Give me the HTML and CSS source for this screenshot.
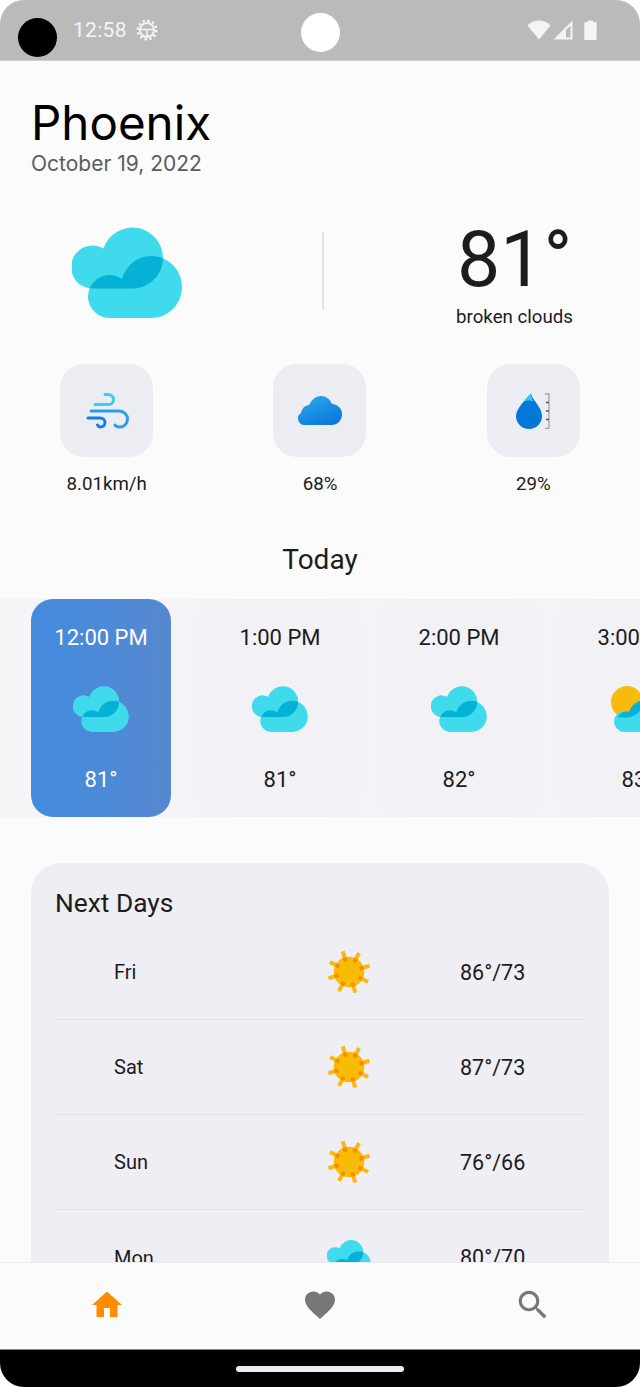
FILE: index.html
```html
<!DOCTYPE html>
<html lang="en">
<head>
    <meta charset="UTF-8" />
    <title>Weather</title>
    <link rel="stylesheet" href="styles.css">
</head>
<body>
    <svg class="defs" width="0" height="0">
        <defs>
            <clipPath id="back-clip">
                <path d="M20.700 61.500A21.500 21.500 0 1 1 31.500 21.500A30.500 30.500 0 1 1 62 61.500z" />
            </clipPath>
            <symbol id="cloud" viewBox="0 0 110 91">
                <path class="cloud-light" d="M20.700 61.500A21.500 21.500 0 1 1 31.500 21.500A30.500 30.500 0 1 1 62 61.500z" />
                <path class="cloud-light" d="M37.700 91A21.500 21.500 0 1 1 50 52A30.500 31 0 1 1 79.500 91z" />
                <path class="cloud-dark" clip-path="url(#back-clip)" d="M37.700 91A21.500 21.500 0 1 1 50 52A30.500 31 0 1 1 79.500 91z" />
            </symbol>
            <symbol id="sun" viewBox="-22 -22 44 44">
                <g class="rays">
                    <path transform="rotate(-17)" d="M0-14V-21.500" />
                    <path transform="rotate(28)" d="M0-14V-21.500" />
                    <path transform="rotate(73)" d="M0-14V-21.500" />
                    <path transform="rotate(118)" d="M0-14V-21.500" />
                    <path transform="rotate(163)" d="M0-14V-21.500" />
                    <path transform="rotate(208)" d="M0-14V-21.500" />
                    <path transform="rotate(253)" d="M0-14V-21.500" />
                    <path transform="rotate(298)" d="M0-14V-21.500" />
                </g>
                <circle class="sun-disc" r="15.300" />
                <g class="sun-dots">
                    <rect transform="rotate(-17)" x="-2" y="-15" width="4" height="4" />
                    <rect transform="rotate(28)" x="-2" y="-15" width="4" height="4" />
                    <rect transform="rotate(73)" x="-2" y="-15" width="4" height="4" />
                    <rect transform="rotate(118)" x="-2" y="-15" width="4" height="4" />
                    <rect transform="rotate(163)" x="-2" y="-15" width="4" height="4" />
                    <rect transform="rotate(208)" x="-2" y="-15" width="4" height="4" />
                    <rect transform="rotate(253)" x="-2" y="-15" width="4" height="4" />
                    <rect transform="rotate(298)" x="-2" y="-15" width="4" height="4" />
                </g>
            </symbol>
            <linearGradient id="blue-cloud" x1="0.2" y1="0" x2="0.8" y2="1">
                <stop offset="0" stop-color="#2ba6ee" />
                <stop offset="1" stop-color="#0a76d8" />
            </linearGradient>
        </defs>
    </svg>

    <div class="status-bar">
        <span class="camera"></span>
        <span class="status-time">12:58</span>
        <svg class="status-gear" width="22" height="22" viewBox="0 0 22 22">
            <circle cx="11" cy="11" r="9.300" fill="none" stroke="#f4f4f4" stroke-width="2.400" stroke-dasharray="2.400 2.470" />
            <circle cx="11" cy="11" r="7" fill="none" stroke="#f4f4f4" stroke-width="2" />
            <path d="M4 10.500H18M11 10.500V17" fill="none" stroke="#f4f4f4" stroke-width="1.600" />
        </svg>
        <span class="status-dot"></span>
        <div class="status-icons">
            <svg width="24" height="20" viewBox="0 0 24 20"><path d="M0.500 5.500C3.500 2.200 7.500 0.500 12 0.500S20.500 2.200 23.500 5.500L12 19.500z" fill="#f4f4f4" /></svg>
            <svg width="20" height="20" viewBox="0 0 20 20"><path d="M19.500 0.500V19.500H0.500z M17.500 5.500L13 10V17.500H17.500z" fill="#f4f4f4" fill-rule="evenodd" /></svg>
            <svg class="status-battery" width="13" height="20" viewBox="0 0 13 20"><path d="M4 2V0.500H9V2H11.500A1.200 1.200 0 0 1 12.700 3.200V18.800A1.200 1.200 0 0 1 11.500 20H1.500A1.200 1.200 0 0 1 0.300 18.800V3.200A1.200 1.200 0 0 1 1.500 2z" fill="#f4f4f4" /></svg>
        </div>
    </div>

    <div class="content">
        <div class="place">
            <h1>Phoenix</h1>
            <p>October 19, 2022</p>
        </div>

        <div class="hero">
            <svg class="hero-icon" width="110" height="91"><use href="#cloud" /></svg>
            <span class="hero-line"></span>
            <div class="hero-text">
                <div class="hero-temp">81°</div>
                <div class="hero-desc">broken clouds</div>
            </div>
        </div>

        <div class="stats">
            <div class="stat">
                <div class="stat-tile">
                    <svg width="44" height="40" viewBox="0 0 44 40" fill="none" stroke-width="3" stroke-linecap="round">
                        <path stroke="#35d0f0" d="M10 13.500H24C27 13.500 28.500 11 28.500 8.500C28.500 5.500 26 3.500 23 3.500H20" />
                        <path stroke="#2a9cec" d="M6 20H34C39 20 42.500 24 42.500 28C42.500 32.500 39 36 35 36C33 36 31 35.500 30 34" />
                        <path stroke="#1080e0" d="M3 27H15C18 27 20 29 20 31.500C20 34 18 36 15.500 36C14 36 13 35 12.500 34" />
                    </svg>
                </div>
                <span>8.01km/h</span>
            </div>
            <div class="stat">
                <div class="stat-tile">
                    <svg width="44" height="29" viewBox="0 0 44 29">
                        <path fill="url(#blue-cloud)" d="M6.500 29A6.500 6.500 0 0 1 3 17C4 12 7 9.500 11 9C14 3 18.500 0 23 0C28 0 32 3 34 8C40 8.500 44 12.500 44 18C44 24.500 39.500 29 33.500 29z" />
                    </svg>
                </div>
                <span>68%</span>
            </div>
            <div class="stat">
                <div class="stat-tile">
                    <svg width="34" height="36" viewBox="0 0 34 36">
                        <path fill="#0078d7" d="M15 0.500C16 7 26 14 26 23A13 13 0 0 1 0 23C0 16 9 7 15 0.500z" />
                        <path fill="#35c8ee" d="M15 0.500C13 3 10 6 7 9C10 7.500 14 7 17.500 8.500C16 6 15.300 3 15 0.500z" />
                        <path d="M29 1H33V35.500H29" fill="none" stroke="#a8a8a8" stroke-width="1.400" />
                        <path d="M30 9.500H33M30 18H33M30 26.500H33" fill="none" stroke="#555" stroke-width="1.400" />
                    </svg>
                </div>
                <span>29%</span>
            </div>
        </div>

        <h2 class="today">Today</h2>

        <div class="hours">
            <div class="hour hour-active">
                <span>12:00 PM</span>
                <svg width="56" height="46"><use href="#cloud" /></svg>
                <span>81°</span>
            </div>
            <div class="hour">
                <span>1:00 PM</span>
                <svg width="56" height="46"><use href="#cloud" /></svg>
                <span>81°</span>
            </div>
            <div class="hour">
                <span>2:00 PM</span>
                <svg width="56" height="46"><use href="#cloud" /></svg>
                <span>82°</span>
            </div>
            <div class="hour">
                <span>3:00 PM</span>
                <svg width="56" height="46" viewBox="0 0 56 46">
                    <circle cx="17" cy="16" r="16" fill="#f6bb0c" />
                    <path class="cloud-light" d="M15 46A10.500 10.500 0 1 1 19 26C22 18 32 14 42 14C50 14 56 22 56 30C56 39 50 46 42 46z" />
                    <path class="cloud-dark" d="M19 26C22 18 28 15 32.500 14.500C32 24 28 30 17 31.500H8C9 28 14 24 19 26z" />
                </svg>
                <span>83°</span>
            </div>
        </div>

        <div class="next-days">
            <h3>Next Days</h3>
            <div class="day">
                <span>Fri</span>
                <svg width="44" height="44"><use href="#sun" /></svg>
                <span class="day-temp">86°/73</span>
            </div>
            <div class="day">
                <span>Sat</span>
                <svg width="44" height="44"><use href="#sun" /></svg>
                <span class="day-temp">87°/73</span>
            </div>
            <div class="day">
                <span>Sun</span>
                <svg width="44" height="44"><use href="#sun" /></svg>
                <span class="day-temp">76°/66</span>
            </div>
            <div class="day">
                <span>Mon</span>
                <svg width="44" height="44"><use href="#cloud" /></svg>
                <span class="day-temp">80°/70</span>
            </div>
        </div>
    </div>

    <div class="bottom-nav">
        <svg class="nav-home" width="36" height="36" viewBox="0 0 24 24"><path d="M10 20v-6h4v6h5v-8h3L12 3 2 12h3v8z" /></svg>
        <svg class="nav-icon" width="36" height="36" viewBox="0 0 24 24"><path d="M12 21.350l-1.450-1.320C5.400 15.360 2 12.280 2 8.500 2 5.420 4.420 3 7.500 3c1.740 0 3.410.810 4.500 2.090C13.090 3.810 14.760 3 16.500 3 19.580 3 22 5.420 22 8.500c0 3.780-3.400 6.860-8.550 11.540L12 21.350z" /></svg>
        <svg class="nav-icon" width="38" height="38" viewBox="0 0 24 24"><path d="M15.500 14h-.790l-.280-.270C15.410 12.590 16 11.110 16 9.500 16 5.910 13.090 3 9.500 3S3 5.910 3 9.500 5.910 16 9.500 16c1.610 0 3.090-.590 4.230-1.570l.270.280v.790l5 4.990L20.490 19l-4.990-5zm-6 0C7.010 14 5 11.990 5 9.500S7.010 5 9.500 5 14 7.010 14 9.500 11.990 14 9.500 14z" /></svg>
    </div>
    <div class="gesture-bar"><span></span></div>
</body>
</html>
```

FILE: styles.css
```css
* {
    box-sizing: border-box;
}
html, body {
    margin: 0;
    padding: 0;
    height: 1387px;
    overflow: hidden;
    background: #fff;
}
body {
    display: flex;
    flex-direction: column;
    font-family: Roboto, "Liberation Sans", sans-serif;
    color: #1c1c1c;
}
.defs {
    position: absolute;
}
.cloud-light {
    fill: #3fdbec;
}
.cloud-dark {
    fill: #05b2d6;
}
.rays path {
    stroke: #fbb80f;
    stroke-width: 4;
    fill: none;
}
.sun-disc {
    fill: #f8bb06;
}
.sun-dots rect {
    fill: #f98b00;
}

/* status bar */
.status-bar {
    flex: none;
    height: 61px;
    display: flex;
    align-items: center;
    padding-left: 18px;
    background: #bababa;
    border-bottom: 1px solid #cfcfcf;
    border-radius: 24px 24px 0 0;
    position: relative;
}
.camera {
    width: 39px;
    height: 39px;
    margin-top: 14px;
    border-radius: 50%;
    background: #000;
}
.status-time {
    margin-left: 16px;
    margin-top: -1px;
    font-size: 21px;
    letter-spacing: 0.3px;
    color: #f4f4f4;
}
.status-gear {
    margin-left: 9px;
    margin-top: -1px;
}
.status-dot {
    position: absolute;
    left: 301px;
    top: 13px;
    width: 39px;
    height: 39px;
    border-radius: 50%;
    background: #fff;
}
.status-icons {
    margin-left: auto;
    margin-right: 43px;
    margin-top: -1px;
    display: flex;
    align-items: center;
    gap: 2px;
}
.status-battery {
    margin-left: 9px;
}

/* main */
.content {
    flex: 1;
    min-height: 0;
    overflow: hidden;
    background: #fbfbfc;
}
.place {
    padding: 36px 0 0 31px;
}
.place h1 {
    margin: 0;
    font-family: Inter, Roboto, sans-serif;
    font-size: 47.5px;
    line-height: 52px;
    font-weight: 400;
    color: #000;
}
.place p {
    margin: 2px 0 0;
    font-family: Inter, Roboto, sans-serif;
    font-size: 21px;
    line-height: 26px;
    color: #5c5c5c;
}
.hero {
    display: grid;
    grid-template-columns: 250px 2px 1fr;
    align-items: center;
    height: 118px;
    margin-top: 36px;
    padding: 0 67px 0 72px;
}
.hero-icon {
    display: block;
}
.hero-line {
    height: 78px;
    margin-top: -2px;
    background: #e4e4ea;
}
.hero-text {
    justify-self: end;
    padding-top: 4px;
    text-align: center;
}
.hero-temp {
    font-size: 77px;
    line-height: 80px;
    font-weight: 400;
}
.hero-desc {
    font-size: 18.7px;
    line-height: 24px;
    margin-top: 5px;
}
.stats {
    display: grid;
    grid-template-columns: repeat(3, 1fr);
    margin-top: 33px;
}
.stat {
    display: flex;
    flex-direction: column;
    align-items: center;
    font-size: 18.7px;
}
.stat-tile {
    width: 93px;
    height: 93px;
    display: flex;
    align-items: center;
    justify-content: center;
    border-radius: 24px;
    background: #ecedf3;
    margin-bottom: 15px;
}
.stat span {
    line-height: 24px;
}
.today {
    margin: 47px 0 0;
    text-align: center;
    font-size: 28px;
    line-height: 34px;
    font-weight: 400;
}
.hours {
    display: flex;
    gap: 39px;
    margin-top: 22px;
    height: 218px;
    padding-left: 31px;
    overflow: hidden;
    background: #f5f5f8;
}
.hour {
    flex: none;
    width: 140px;
    height: 218px;
    padding-top: 25px;
    display: flex;
    flex-direction: column;
    align-items: center;
    font-size: 22px;
    line-height: 28px;
    border-radius: 22px;
    background: #f1f1f6;
    box-shadow: 0 0 24px 8px #f1f1f6;
}
.hour svg {
    margin: 34px 0;
}
.hour-active {
    position: relative;
    color: #fff;
    background: linear-gradient(90deg, #438be0, #5688ce);
    box-shadow: none;
}
.next-days {
    margin: 46px 31px 0;
    height: 500px;
    padding: 25px 23px 0 24px;
    border-radius: 30px;
    background: #eeeef4;
}
.next-days h3 {
    margin: 0 0 7px;
    font-size: 26.3px;
    line-height: 30px;
    font-weight: 400;
}
.day {
    display: grid;
    grid-template-columns: 213px 44px 1fr;
    align-items: center;
    height: 95px;
    padding-left: 59px;
    font-size: 20px;
    border-bottom: 1px solid #e0e0e6;
}
.day-temp {
    padding-left: 89px;
    font-size: 21.5px;
}
.day:last-child {
    border-bottom: none;
}

/* bottom */
.bottom-nav {
    flex: none;
    height: 88px;
    padding-bottom: 2px;
    display: grid;
    grid-template-columns: repeat(3, 1fr);
    align-items: center;
    justify-items: center;
    background: #fbfbfb;
    border-top: 1px solid #ecebee;
    border-bottom: 1px solid #8a8a8a;
}
.nav-home {
    fill: #ff8c00;
}
.nav-icon {
    fill: #777;
}
.gesture-bar {
    flex: none;
    height: 37px;
    display: flex;
    align-items: center;
    justify-content: center;
    background: #000;
    border-radius: 0 0 24px 24px;
}
.gesture-bar span {
    width: 168px;
    height: 6px;
    border-radius: 3px;
    background: #ecebf2;
}
```
